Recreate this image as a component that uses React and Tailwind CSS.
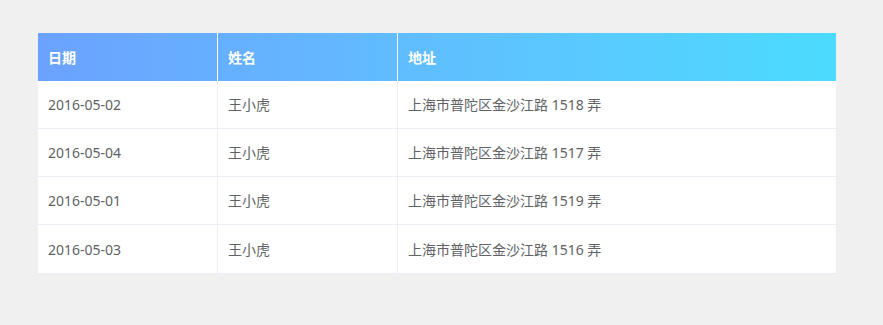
const rows = [
  { date: '2016-05-02', name: '王小虎', address: '上海市普陀区金沙江路 1518 弄' },
  { date: '2016-05-04', name: '王小虎', address: '上海市普陀区金沙江路 1517 弄' },
  { date: '2016-05-01', name: '王小虎', address: '上海市普陀区金沙江路 1519 弄' },
  { date: '2016-05-03', name: '王小虎', address: '上海市普陀区金沙江路 1516 弄' },
];

export default function App() {
  return (
    <div
      className="min-h-[325px] w-full bg-[#f0f0f0] pt-[33px] pl-[38px]"
      style={{ fontFamily: '"Noto Sans", "Noto Sans CJK SC", sans-serif' }}
    >
      <div className="w-[799px] border-r border-b border-[#ebeef5] bg-white text-[14px] text-[#606266]">
        <div className="flex h-12 bg-gradient-to-r from-[#6ba2ff] to-[#4bdbfe] font-bold text-white">
          <div className="flex w-[180px] items-center border-r border-white px-[10px]">日期</div>
          <div className="flex w-[180px] items-center border-r border-white px-[10px]">姓名</div>
          <div className="flex flex-1 items-center px-[10px]">地址</div>
        </div>
        {rows.map((row, i) => (
          <div key={i} className={`flex h-12 ${i < rows.length - 1 ? 'border-b border-[#ebeef5]' : ''}`}>
            <div className="flex w-[180px] items-center border-r border-[#ebeef5] px-[10px]">{row.date}</div>
            <div className="flex w-[180px] items-center border-r border-[#ebeef5] px-[10px]">{row.name}</div>
            <div className="flex flex-1 items-center px-[10px]">{row.address}</div>
          </div>
        ))}
      </div>
    </div>
  );
}
